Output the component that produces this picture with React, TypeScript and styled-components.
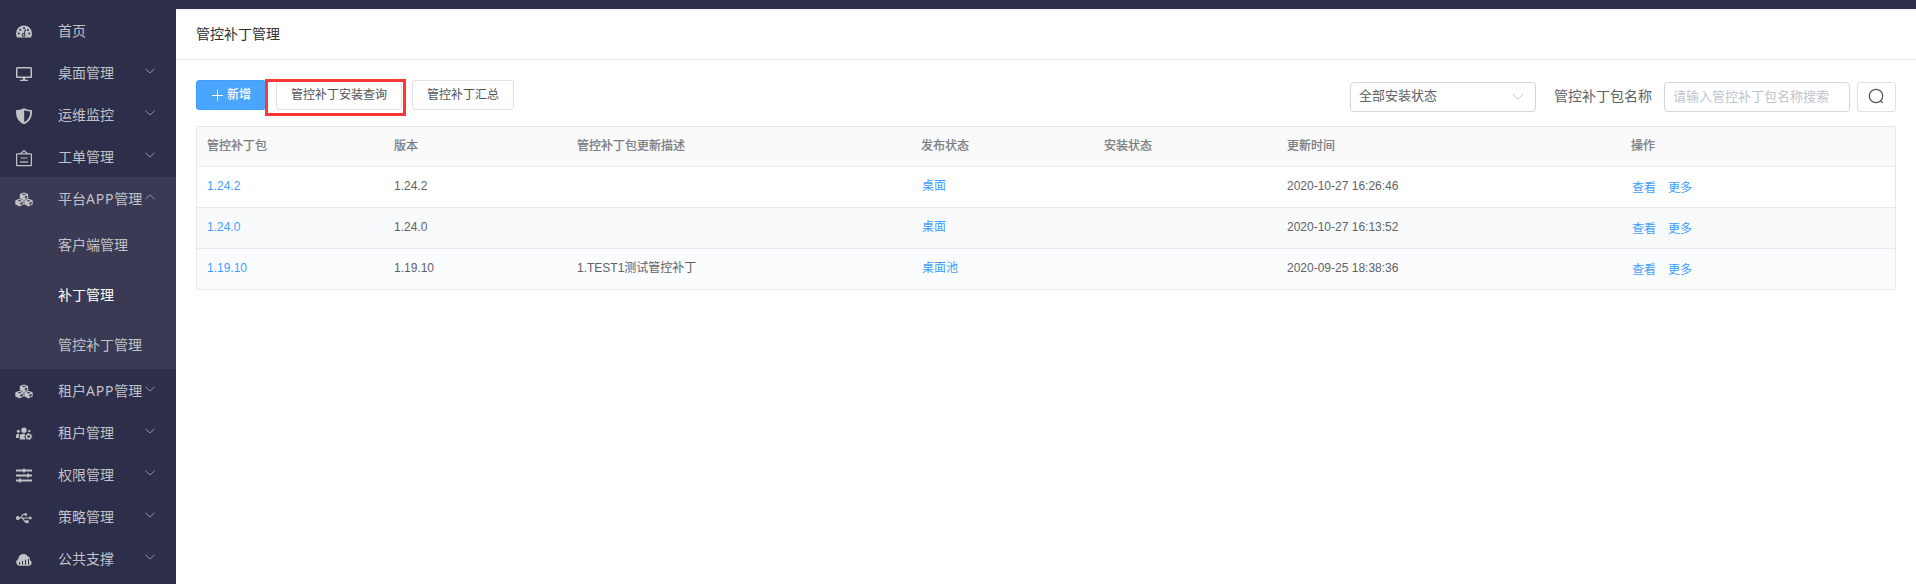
import React from 'react';
import styled, { createGlobalStyle } from 'styled-components';

const GlobalStyle = createGlobalStyle`
  *, *::before, *::after { box-sizing: border-box; }
  body {
    margin: 0;
    background: #fff;
    color: #606266;
    font-family: "Liberation Sans", "Noto Sans CJK SC", sans-serif;
    font-size: 12px;
    overflow: hidden;
  }
`;

const Page = styled.div`
  display: flex;
  flex-direction: column;
  height: 584px;
  overflow: hidden;
`;

const TopBar = styled.header`
  flex: none;
  height: 9px;
  background: #2d2e49;
`;

const Body = styled.div`
  flex: 1;
  display: flex;
  min-height: 0;
`;

const Sidebar = styled.nav`
  flex: none;
  width: 176px;
  background: #2d2e49;
  overflow: hidden;
`;

const Group = styled.div<{ $open?: boolean }>`
  background: ${(p) => (p.$open ? '#3a3a54' : 'transparent')};
`;

const MenuItem = styled.div`
  display: flex;
  align-items: center;
  height: 42px;
  padding: 1px 21px 0 15px;
  color: #c2c2c6;
`;

const IconSlot = styled.span`
  display: flex;
  flex: none;
  width: 18px;
  height: 18px;
  margin: 3px 25px 0 0;
`;

const MenuLabel = styled.span`
  flex: 1;
  font-size: 14px;
  line-height: 20px;
  white-space: nowrap;
`;

const Latin = styled.span`
  font-family: "Noto Sans", sans-serif;
  letter-spacing: 0.8px;
`;

const ArrowSlot = styled.span`
  display: flex;
  flex: none;
  margin: -3px 0 0 0;
  color: #92929c;
`;

const SubItem = styled.div<{ $active?: boolean }>`
  height: 50px;
  padding: 1px 0 0 58px;
  font-size: 14px;
  line-height: 50px;
  color: ${(p) => (p.$active ? '#fff' : '#c2c2c6')};
`;

const Main = styled.main`
  flex: 1;
  min-width: 0;
  box-shadow: inset 0 3px 3px -2px rgba(0, 0, 0, 0.08);
`;

const PageHead = styled.div`
  height: 51px;
  padding-left: 20px;
  border-bottom: 1px solid #e6e6e6;
  font-size: 14px;
  line-height: 50px;
  color: #303133;
`;

const Content = styled.div`
  padding: 20px 20px 0;
`;

const Toolbar = styled.div`
  display: flex;
  justify-content: space-between;
  height: 46px;
`;

const Actions = styled.div`
  display: flex;
  align-items: flex-start;
  gap: 10px;
`;

const Button = styled.button<{ $primary?: boolean; $width: number }>`
  display: flex;
  align-items: center;
  justify-content: center;
  gap: 4px;
  width: ${(p) => p.$width}px;
  height: 30px;
  padding: 0;
  border: 1px solid ${(p) => (p.$primary ? '#409eff' : '#e0e0e3')};
  border-radius: 3px;
  background: ${(p) => (p.$primary ? '#4ca5fd' : '#fff')};
  color: ${(p) => (p.$primary ? '#fff' : '#505256')};
  font-family: inherit;
  font-size: 12px;
  font-weight: ${(p) => (p.$primary ? 500 : 400)};
  line-height: 28px;
  white-space: nowrap;
`;

const Marked = styled.div`
  position: relative;
  &::after {
    content: '';
    position: absolute;
    left: -11px;
    top: -1px;
    width: 141px;
    height: 37px;
    border: 3px solid #fb3636;
  }
`;

const Filters = styled.div`
  display: flex;
  align-items: center;
  height: 30px;
  margin-top: 2px;
`;

const Field = styled.div`
  display: flex;
  align-items: center;
  justify-content: space-between;
  width: 186px;
  height: 30px;
  padding: 0 11px 0 8px;
  border: 1px solid #d4d6db;
  border-radius: 4px;
  font-size: 13px;
  line-height: 26px;
  color: #606266;
`;

const FieldText = styled.span`
  height: 28px;
`;

const SearchInput = styled.input`
  width: 186px;
  height: 30px;
  padding: 0 8px 2px;
  border: 1px solid #d4d6db;
  border-radius: 4px;
  font-family: inherit;
  font-size: 13px;
  &::placeholder { color: #c0c4cc; }
`;

const FieldLabel = styled.label`
  height: 30px;
  margin: 0 12px 0 18px;
  font-size: 14px;
  line-height: 28px;
  color: #606266;
`;

const SearchButton = styled.button`
  display: flex;
  align-items: center;
  justify-content: center;
  width: 39px;
  height: 30px;
  margin-left: 7px;
  padding: 0 1px 2px 0;
  border: 1px solid #e0e0e3;
  border-radius: 3px;
  background: #fff;
  color: #55575b;
`;

const Table = styled.div`
  border: 1px solid #e6e7ea;
  border-bottom: 0;
`;

const Row = styled.div<{ $bg?: string; $head?: boolean }>`
  display: grid;
  grid-template-columns: 187px 183px 344px 183px 183px 344px 1fr;
  height: ${(p) => (p.$head ? 40 : 41)}px;
  border-bottom: 1px solid #e8eaf0;
  background: ${(p) => p.$bg ?? '#fff'};
  color: ${(p) => (p.$head ? '#77797d' : '#606266')};
  -webkit-text-stroke: ${(p) => (p.$head ? '0.25px' : '0')};
`;

const Cell = styled.div<{ $shift?: number }>`
  padding: ${(p) => p.$shift ?? 0}px 0 0 10px;
  line-height: 38px;
  white-space: nowrap;
`;

const Link = styled.a<{ $indent?: boolean }>`
  margin-left: ${(p) => (p.$indent ? 1 : 0)}px;
  margin-right: 11px;
  color: #409eff;
  text-decoration: none;
`;

type IconName = 'gauge' | 'monitor' | 'shield' | 'order' | 'cubes' | 'users' | 'sliders' | 'usb' | 'cloud';

const Cube = ({ x, y }: { x: number; y: number }) => (
  <g transform={`translate(${x} ${y})`}>
    <path d="M4.3 0 8.4 1.5 8.600 5.600 4.300 7.900 0 5.600.2 1.500z" fill="currentColor" />
    <path d="M2.300 2 4.300 1.300l2 .7-2 .7zM5.200 6.200V4l2.200-.9v2z" fill="var(--hole)" />
  </g>
);

const shapes: Record<IconName, React.ReactNode> = {
  gauge: (
    <>
      <path d="M9 2.5a8 8 0 0 0-8 8c0 1.5.4 2.8 1 4h14c.6-1.2 1-2.5 1-4a8 8 0 0 0-8-8z" fill="currentColor" />
      <g fill="var(--hole)">
        <circle cx="3.7" cy="10.5" r="1" /><circle cx="5.3" cy="6.8" r="1" /><circle cx="9" cy="5.1" r="1" />
        <circle cx="14.3" cy="10.5" r="1" /><circle cx="12.9" cy="6.9" r="1" /><circle cx="8.6" cy="11.9" r="1.9" />
      </g>
      <path d="m8.7 11.8 1.8-5.6" stroke="var(--hole)" strokeWidth="1.1" />
      <circle cx="8.6" cy="11.9" r=".9" fill="currentColor" />
    </>
  ),
  monitor: (
    <>
      <rect x="1.7" y="2.7" width="14.6" height="9.6" rx=".8" fill="none" stroke="currentColor" strokeWidth="1.5" />
      <path d="M7.8 12.8h2.4v2h2.800v1.200H5v-1.200h2.800z" fill="currentColor" />
    </>
  ),
  shield: (
    <path fillRule="evenodd" d="M9 .9c2.2 1.400 4.800 2 7.900 2 .5 6.600-1.500 11.500-7.900 14.300C2.600 14.400.6 9.500 1.100 2.900c3.100 0 5.700-.6 7.900-2zM9.200 3v12c4.400-2.300 5.900-5.600 5.900-10.600C12.800 4.300 10.900 4 9.200 3z" fill="currentColor" />
  ),
  order: (
    <g fill="none" stroke="currentColor" strokeWidth="1.200">
      <rect x="1.600" y="4.800" width="14.800" height="11.800" rx=".6" />
      <path d="M5.200 4.800 9 1.800l3.800 3M5.500 9h7" />
      <path d="M5 13h8" strokeWidth="1.800" opacity=".7" />
    </g>
  ),
  cubes: (
    <>
      <Cube x={4.700} y={1.500} /><Cube x={.2} y={7.700} /><Cube x={9.200} y={7.700} />
    </>
  ),
  users: (
    <g fill="currentColor">
      <circle cx="9" cy="5.200" r="2.700" /><circle cx="3.300" cy="6.300" r="1.500" /><circle cx="14.300" cy="6.100" r="1.200" />
      <path d="M1 13V10.400q0-1.600 2.200-1.600 1 0 1.400.6-1 1-1 3.600zM4.700 14.500v-3q0-2.700 3.600-2.700h1.800q-1.400 3 .4 5.700z" />
      <circle cx="13.700" cy="11.600" r="2.100" fill="none" stroke="currentColor" strokeWidth="1.500" />
      <circle cx="13.700" cy="11.600" r="3.100" fill="none" stroke="currentColor" strokeWidth="1" strokeDasharray="1.400 1.850" />
    </g>
  ),
  sliders: (
    <path d="M1 3.500h16M1 8.500h16M1 13.500h16M9 1.500v4M13 6.500v4M5 11.500v4" stroke="currentColor" strokeWidth="1.800" fill="none" />
  ),
  usb: (
    <g fill="currentColor">
      <circle cx="2.800" cy="9" r="2" />
      <path d="m17.400 9-2.900-2v4z" />
      <path d="M4 9h11M5.500 9l2.500-3.500h2M7.500 9l2.500 3.700h1.700" fill="none" stroke="currentColor" strokeWidth="1.200" />
      <circle cx="10.700" cy="5.400" r="1.400" /><path d="M10.600 11.200h3v3h-3z" />
    </g>
  ),
  cloud: (
    <>
      <path d="M4.300 14.800A3.500 3.500 0 0 1 3.300 8.100 5.200 5.200 0 0 1 12.800 5.300a3.200 3.200 0 0 1 2 3.600 3.100 3.100 0 0 1-.8 5.900z" fill="currentColor" />
      <path d="M4.500 13.600v-2.400M7.500 13.600V9.900M10.500 13.600V8.800M13.500 13.600V8" stroke="var(--hole)" strokeWidth="1" />
    </>
  ),
};

const Glyph = styled.svg<{ $hole: string }>`
  --hole: ${(p) => p.$hole};
  width: 18px;
  height: 18px;
`;

const Arrow = ({ up }: { up?: boolean }) => (
  <ArrowSlot>
    <svg width="10" height="6" viewBox="0 0 10 6" fill="none" stroke="currentColor">
      <path d={up ? 'M.5 5 5 .800l4.500 4.200' : 'M.5.800 5 5 9.500.8'} />
    </svg>
  </ArrowSlot>
);

interface Entry {
  label: React.ReactNode;
  icon: IconName;
  leaf?: boolean;
  children?: { label: string; active?: boolean }[];
}

const menu: Entry[] = [
  { label: '首页', icon: 'gauge', leaf: true },
  { label: '桌面管理', icon: 'monitor' },
  { label: '运维监控', icon: 'shield' },
  { label: '工单管理', icon: 'order' },
  {
    label: <>平台<Latin>APP</Latin>管理</>,
    icon: 'cubes',
    children: [{ label: '客户端管理' }, { label: '补丁管理', active: true }, { label: '管控补丁管理' }],
  },
  { label: <>租户<Latin>APP</Latin>管理</>, icon: 'cubes' },
  { label: '租户管理', icon: 'users' },
  { label: '权限管理', icon: 'sliders' },
  { label: '策略管理', icon: 'usb' },
  { label: '公共支撑', icon: 'cloud' },
];

const headers = ['管控补丁包', '版本', '管控补丁包更新描述', '发布状态', '安装状态', '更新时间', '操作'];

const patches = [
  { version: '1.24.2', note: '', target: '桌面', time: '2020-10-27 16:26:46', bg: '#fff' },
  { version: '1.24.0', note: '', target: '桌面', time: '2020-10-27 16:13:52', bg: '#f8fafc' },
  { version: '1.19.10', note: '1.TEST1测试管控补丁', target: '桌面池', time: '2020-09-25 18:38:36', bg: '#fbfcfe' },
];

export default function App() {
  return (
    <Page>
      <GlobalStyle />
      <TopBar />
      <Body>
        <Sidebar>
          {menu.map((item, i) => (
            <Group key={i} $open={!!item.children}>
              <MenuItem>
                <IconSlot>
                  <Glyph viewBox="0 0 18 18" $hole={item.children ? '#3a3a54' : '#2d2e49'}>{shapes[item.icon]}</Glyph>
                </IconSlot>
                <MenuLabel>{item.label}</MenuLabel>
                {!item.leaf && <Arrow up={!!item.children} />}
              </MenuItem>
              {item.children?.map((c) => (
                <SubItem key={c.label} $active={c.active}>{c.label}</SubItem>
              ))}
            </Group>
          ))}
        </Sidebar>
        <Main>
          <PageHead>管控补丁管理</PageHead>
          <Content>
            <Toolbar>
              <Actions>
                <Button $primary $width={70}>
                  <svg width="12" height="12" viewBox="0 0 12 12" stroke="currentColor" fill="none">
                    <path d="M6.500.5v11M1 6.500h11" />
                  </svg>
                  新增
                </Button>
                <Marked><Button $width={126}>管控补丁安装查询</Button></Marked>
                <Button $width={102}>管控补丁汇总</Button>
              </Actions>
              <Filters>
                <Field>
                  <FieldText>全部安装状态</FieldText>
                  <svg width="12" height="8" viewBox="0 0 12 8" fill="none" stroke="#c0c4cc">
                    <path d="m.8 1 5.200 5.500L11.200 1" />
                  </svg>
                </Field>
                <FieldLabel>管控补丁包名称</FieldLabel>
                <SearchInput placeholder="请输入管控补丁包名称搜索" />
                <SearchButton>
                  <svg width="18" height="18" viewBox="0 0 18 18" fill="none" stroke="currentColor" strokeWidth="1.200">
                    <circle cx="9" cy="9" r="6.700" />
                    <path d="m12.800 14 3.200 1.800" />
                  </svg>
                </SearchButton>
              </Filters>
            </Toolbar>
            <Table>
              <Row $head $bg="#fafafa">
                {headers.map((h) => <Cell key={h}>{h}</Cell>)}
              </Row>
              {patches.map((p) => (
                <Row key={p.version} $bg={p.bg}>
                  <Cell><Link>{p.version}</Link></Cell>
                  <Cell>{p.version}</Cell>
                  <Cell>{p.note}</Cell>
                  <Cell><Link $indent>{p.target}</Link></Cell>
                  <Cell />
                  <Cell>{p.time}</Cell>
                  <Cell $shift={2}><Link $indent>查看</Link><Link $indent>更多</Link></Cell>
                </Row>
              ))}
            </Table>
          </Content>
        </Main>
      </Body>
    </Page>
  );
}
